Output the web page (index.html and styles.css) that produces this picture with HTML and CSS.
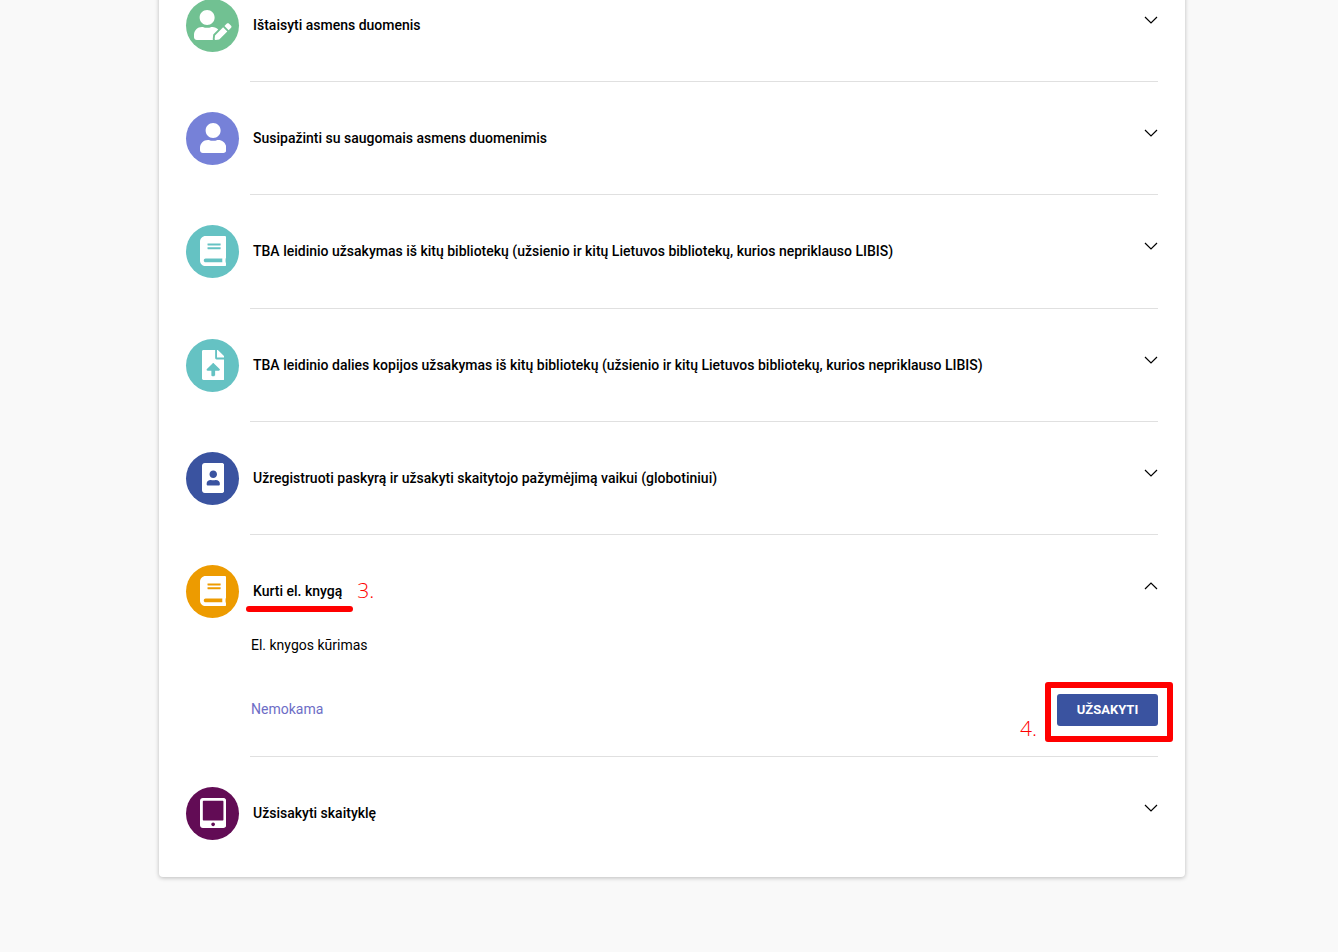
FILE: index.html
```html
<!DOCTYPE html>
<html lang="lt">
<head>
  <meta charset="UTF-8" />
  <meta name="viewport" content="width=device-width, initial-scale=1.0"/>
  <title>Paslaugos</title>
  <link rel="stylesheet" href="styles.css">
</head>
<body>
  <main class="page">
    <ul class="services">
      <li class="service">
        <span class="icon green">
          <svg viewBox="0 0 640 512"><path d="M224 256c70.7 0 128-57.3 128-128S294.7 0 224 0 96 57.3 96 128s57.3 128 128 128zm89.600 32h-16.700c-22.200 10.200-46.900 16-72.900 16s-50.600-5.800-72.900-16h-16.700C60.200 288 0 348.200 0 422.400V464c0 26.500 21.500 48 48 48h274.900c-2.400-6.800-3.400-14-2.600-21.300l6.800-60.900 1.200-11.100 7.900-7.900 77.300-77.300c-24.500-27.700-60-45.500-99.900-45.500zm45.300 145.300l-6.800 61c-1.100 10.200 7.500 18.800 17.600 17.600l60.900-6.800 137.900-137.900-71.700-71.700-137.900 137.800zM633 268.900L595.100 231c-9.300-9.300-24.500-9.300-33.800 0l-37.800 37.800-4.100 4.100 71.800 71.700 41.800-41.800c9.300-9.400 9.300-24.500 0-33.900z"/></svg>
        </span>
        <div class="service-body">
          <button class="service-head" aria-expanded="false">
            <span class="service-title">Ištaisyti asmens duomenis</span>
            <svg class="chevron" viewBox="0 0 14 8"><path d="M1 1l6 6 6-6"/></svg>
          </button>
        </div>
      </li>
      <li class="service">
        <span class="icon violet">
          <svg viewBox="0 0 448 512"><path d="M224 256c70.7 0 128-57.3 128-128S294.7 0 224 0 96 57.3 96 128s57.3 128 128 128zm89.6 32h-16.7c-22.2 10.2-46.9 16-72.9 16s-50.6-5.8-72.9-16h-16.7C60.2 288 0 348.2 0 422.4V464c0 26.5 21.5 48 48 48h352c26.5 0 48-21.5 48-48v-41.6c0-74.2-60.2-134.4-134.4-134.4z"/></svg>
        </span>
        <div class="service-body">
          <button class="service-head" aria-expanded="false">
            <span class="service-title">Susipažinti su saugomais asmens duomenimis</span>
            <svg class="chevron" viewBox="0 0 14 8"><path d="M1 1l6 6 6-6"/></svg>
          </button>
        </div>
      </li>
      <li class="service">
        <span class="icon teal">
          <svg viewBox="0 0 448 512"><path d="M448 360V24c0-13.3-10.7-24-24-24H96C43 0 0 43 0 96v320c0 53 43 96 96 96h328c13.3 0 24-10.7 24-24v-16c0-7.5-3.5-14.3-8.900-18.700-4.200-15.400-4.200-59.300 0-74.700 5.400-4.300 8.900-11.100 8.900-18.600zM128 134c0-3.300 2.700-6 6-6h212c3.300 0 6 2.700 6 6v20c0 3.300-2.700 6-6 6H134c-3.300 0-6-2.700-6-6v-20zm0 64c0-3.300 2.700-6 6-6h212c3.300 0 6 2.700 6 6v20c0 3.300-2.700 6-6 6H134c-3.300 0-6-2.700-6-6v-20zm253.400 250H96c-17.700 0-32-14.300-32-32 0-17.600 14.400-32 32-32h285.400c-1.900 17.100-1.900 46.900 0 64z"/></svg>
        </span>
        <div class="service-body">
          <button class="service-head" aria-expanded="false">
            <span class="service-title">TBA leidinio užsakymas iš kitų bibliotekų (užsienio ir kitų Lietuvos bibliotekų, kurios nepriklauso LIBIS)</span>
            <svg class="chevron" viewBox="0 0 14 8"><path d="M1 1l6 6 6-6"/></svg>
          </button>
        </div>
      </li>
      <li class="service">
        <span class="icon teal">
          <svg viewBox="0 0 384 512"><path d="M224 136V0H24C10.7 0 0 10.7 0 24v464c0 13.3 10.7 24 24 24h336c13.3 0 24-10.7 24-24V160H248c-13.2 0-24-10.8-24-24zm65.180 216.010H224v80c0 8.840-7.160 16-16 16h-32c-8.840 0-16-7.160-16-16v-80H94.820c-14.280 0-21.410-17.290-11.270-27.360l96.420-95.700c6.650-6.610 17.390-6.610 24.040 0l96.420 95.700c10.150 10.070 3.030 27.360-11.250 27.360zM377 105L279.100 7c-4.500-4.500-10.600-7-17-7H256v128h128v-6.100c0-6.300-2.500-12.400-7-16.900z"/></svg>
        </span>
        <div class="service-body">
          <button class="service-head" aria-expanded="false">
            <span class="service-title">TBA leidinio dalies kopijos užsakymas iš kitų bibliotekų (užsienio ir kitų Lietuvos bibliotekų, kurios nepriklauso LIBIS)</span>
            <svg class="chevron" viewBox="0 0 14 8"><path d="M1 1l6 6 6-6"/></svg>
          </button>
        </div>
      </li>
      <li class="service">
        <span class="icon blue">
          <svg viewBox="0 0 384 512"><path d="M336 0H48C21.5 0 0 21.5 0 48v416c0 26.5 21.5 48 48 48h288c26.5 0 48-21.5 48-48V48c0-26.5-21.5-48-48-48zM192 128c35.3 0 64 28.7 64 64s-28.7 64-64 64-64-28.7-64-64 28.7-64 64-64zm112 236.8c0 10.6-10 19.2-22.4 19.2H102.4C90 384 80 375.4 80 364.8v-19.2c0-31.8 30.1-57.6 67.2-57.6h5c12.3 5.1 25.7 8 39.8 8s27.6-2.9 39.8-8h5c37.1 0 67.2 25.8 67.2 57.6v19.2z"/></svg>
        </span>
        <div class="service-body">
          <button class="service-head" aria-expanded="false">
            <span class="service-title">Užregistruoti paskyrą ir užsakyti skaitytojo pažymėjimą vaikui (globotiniui)</span>
            <svg class="chevron" viewBox="0 0 14 8"><path d="M1 1l6 6 6-6"/></svg>
          </button>
        </div>
      </li>
      <li class="service">
        <span class="icon orange">
          <svg viewBox="0 0 448 512"><path d="M448 360V24c0-13.3-10.7-24-24-24H96C43 0 0 43 0 96v320c0 53 43 96 96 96h328c13.3 0 24-10.7 24-24v-16c0-7.5-3.5-14.3-8.900-18.700-4.200-15.400-4.200-59.300 0-74.700 5.400-4.300 8.900-11.100 8.900-18.600zM128 134c0-3.300 2.700-6 6-6h212c3.300 0 6 2.700 6 6v20c0 3.300-2.700 6-6 6H134c-3.300 0-6-2.700-6-6v-20zm0 64c0-3.300 2.700-6 6-6h212c3.300 0 6 2.700 6 6v20c0 3.300-2.700 6-6 6H134c-3.300 0-6-2.700-6-6v-20zm253.400 250H96c-17.700 0-32-14.300-32-32 0-17.600 14.400-32 32-32h285.400c-1.900 17.100-1.900 46.900 0 64z"/></svg>
        </span>
        <div class="service-body">
          <button class="service-head" aria-expanded="true" aria-controls="bookDetails">
            <span class="service-title marked">Kurti el. knygą<span class="step step-title">3.</span></span>
            <svg class="chevron" viewBox="0 0 14 8"><path d="M1 7l6-6 6 6"/></svg>
          </button>
          <div class="details" id="bookDetails">
            <p class="description">El. knygos kūrimas</p>
            <div class="details-foot">
              <span class="price">Nemokama</span>
              <div class="order">
                <span class="step step-order">4.</span>
                <button class="order-btn">UŽSAKYTI</button>
              </div>
            </div>
          </div>
        </div>
      </li>
      <li class="service">
        <span class="icon plum">
          <svg viewBox="0 0 448 512"><path d="M400 0H48C21.5 0 0 21.5 0 48v416c0 26.5 21.5 48 48 48h352c26.5 0 48-21.5 48-48V48c0-26.5-21.5-48-48-48zM224 480c-17.7 0-32-14.3-32-32s14.3-32 32-32 32 14.3 32 32-14.3 32-32 32zm176-108c0 6.6-5.4 12-12 12H60c-6.6 0-12-5.4-12-12V60c0-6.6 5.4-12 12-12h328c6.6 0 12 5.4 12 12v312z"/></svg>
        </span>
        <div class="service-body">
          <button class="service-head" aria-expanded="false">
            <span class="service-title">Užsisakyti skaityklę</span>
            <svg class="chevron" viewBox="0 0 14 8"><path d="M1 1l6 6 6-6"/></svg>
          </button>
        </div>
      </li>
    </ul>
  </main>
</body>
</html>
```
FILE: styles.css
```css
:root {
  --bg: #f9f9f9;
  --line: #e0e0e0;
  --primary: #3a53a0;
  --price: #6d6dc6;
  --mark: #ff0000;
}

* {
  box-sizing: border-box;
}

body {
  margin: 0;
  font-family: Roboto, "Liberation Sans", sans-serif;
  font-size: 14px;
  line-height: 20px;
  background-color: var(--bg);
  color: #000;
}

button {
  font: inherit;
  color: inherit;
  border: none;
  cursor: pointer;
}

.page {
  display: flow-root;
  padding: 0 153px 75px 159px;
}

/* the first row starts above the fold */
.services {
  list-style: none;
  margin: -31px 0 0;
  padding: 0 27px 8px;
  background-color: #fff;
  border-radius: 4px;
  box-shadow: 0 1px 4px rgba(0, 0, 0, 0.25);
}

.service {
  display: flex;
  gap: 11px;
  padding-top: 30px;
}

.icon {
  flex: none;
  display: flex;
  align-items: center;
  justify-content: center;
  width: 53px;
  height: 53px;
  padding: 0 0 2px 1px;
  border-radius: 50%;
}

.icon svg {
  height: 30px;
  fill: #fff;
}

.green { background-color: #71c192; }
.violet { background-color: #7681d8; }
.teal { background-color: #65c2c3; }
.blue { background-color: #3a53a0; }
.orange { background-color: #ed9b00; }
.plum { background-color: #620c55; }

.service-body {
  flex: 1;
  padding-bottom: 29px;
  border-bottom: 1px solid var(--line);
}

.service:nth-child(3n) .service-body {
  padding-bottom: 30px;
}

.service:last-child .service-body {
  border-bottom: none;
}

.service-head {
  display: flex;
  align-items: center;
  justify-content: space-between;
  width: 100%;
  height: 53px;
  padding: 0 0 2px 3px;
  background: none;
  text-align: left;
}

.service-title {
  font-weight: 500;
}

.chevron {
  flex: none;
  align-self: flex-start;
  width: 14px;
  height: 8px;
  margin-top: 17px;
  fill: none;
  stroke: #000;
  stroke-width: 1.2;
}

.details {
  padding: 17px 0 0 1px;
}

.description {
  margin: 0;
}

.details-foot {
  display: flex;
  align-items: center;
  justify-content: space-between;
  margin-top: 39px;
}

.price {
  padding-bottom: 2px;
  color: var(--price);
}

.order {
  position: relative;
}

.order-btn {
  display: block;
  width: 101px;
  height: 32px;
  padding: 0;
  border-radius: 3px;
  background-color: var(--primary);
  color: #fff;
  font-size: 13px;
  font-weight: 700;
}

/* red step marks over the rows */
.marked {
  position: relative;
}

.marked::after {
  content: '';
  position: absolute;
  left: -7px;
  right: -11px;
  top: 25px;
  height: 6px;
  border-radius: 3px;
  background-color: var(--mark);
}

.order::after {
  content: '';
  position: absolute;
  top: -12px;
  right: -15px;
  bottom: -16px;
  left: -12px;
  border: 6px solid var(--mark);
  border-radius: 3px;
  pointer-events: none;
}

.step {
  position: absolute;
  font-family: "Open Sans", "Noto Sans", sans-serif;
  font-size: 21px;
  font-weight: 300;
  line-height: 28px;
  color: var(--mark);
}

.step-title {
  left: 100%;
  top: -5px;
  margin-left: 15px;
}

.step-order {
  right: 100%;
  top: 20px;
  margin-right: 20px;
}
```
